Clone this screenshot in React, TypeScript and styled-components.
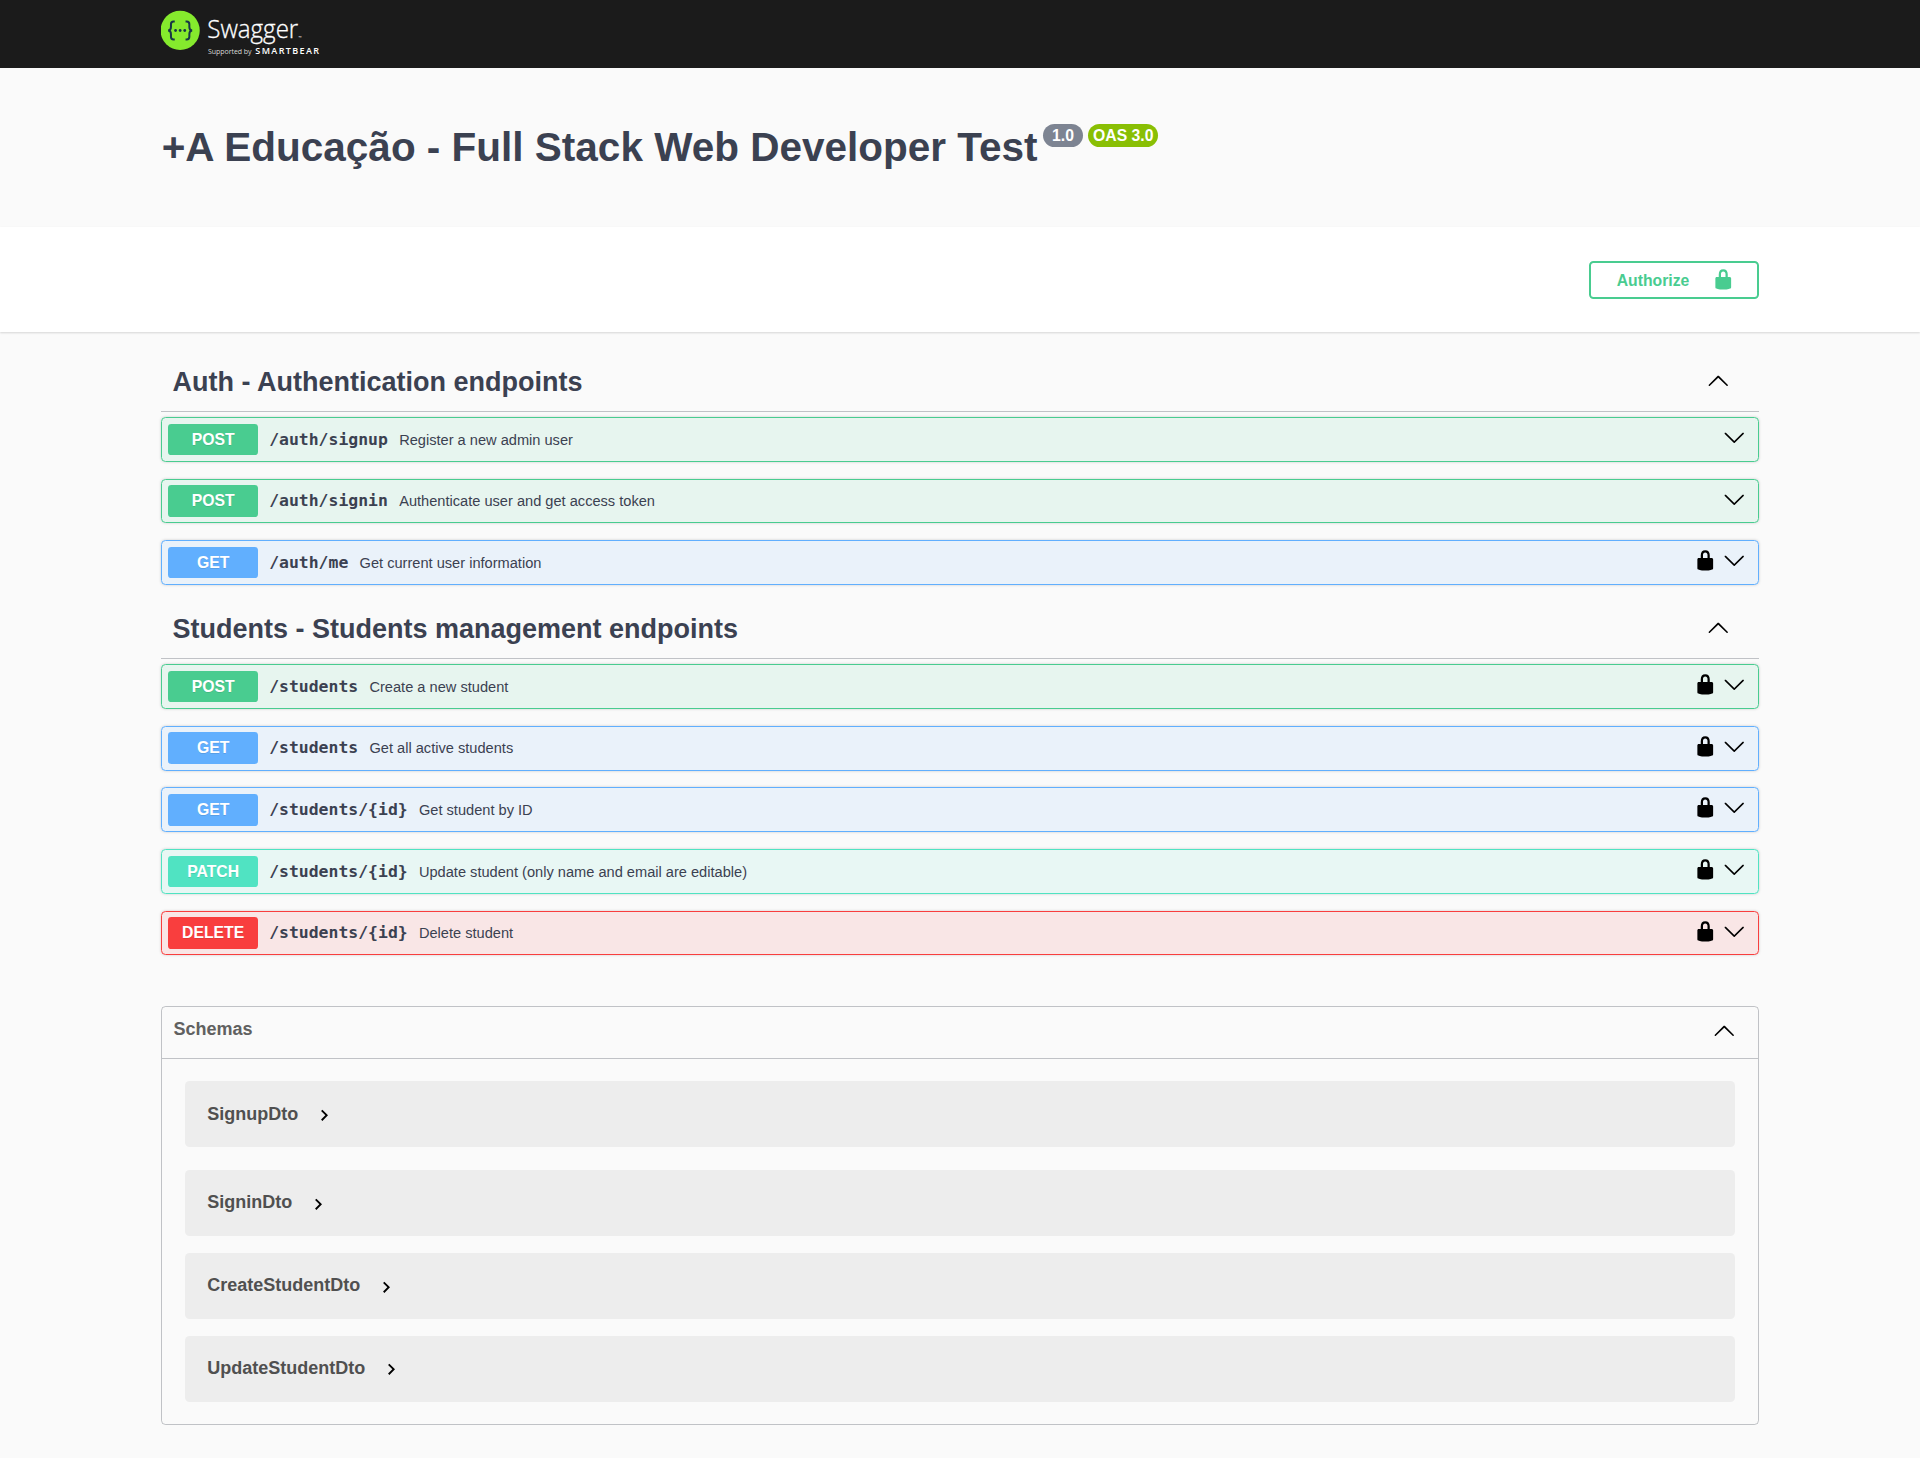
import React from "react";
import styled, { createGlobalStyle } from "styled-components";

const ink = "#3b4151";
const sans = `"Liberation Sans", Arial, sans-serif`;

const GlobalStyle = createGlobalStyle`
  *, *::before, *::after { box-sizing: border-box; }
  body { margin: 0; background: #fafafa; color: ${ink}; font-family: ${sans}; }
  h1, h2, h3, h4 { margin: 0; }
`;

const Page = styled.div`
  min-height: 1458px;
  overflow: hidden;
`;

const Wrapper = styled.div`
  width: 1597.5px;
  margin: 0 auto;
`;

const Topbar = styled.header`
  height: 67.5px;
  background: #1b1b1b;
`;

const LogoSvg = styled.svg`
  display: block;
`;

const Info = styled.section`
  height: 159.4px;
  padding-top: 56.2px;
`;

const Title = styled.h1`
  display: flex;
  align-items: flex-start;
  padding-left: 0.4px;
  font-size: 40.5px;
  line-height: 47px;
  font-weight: 700;
  white-space: nowrap;
`;

const Badge = styled.span<{ $bg: string; $pad: number }>`
  height: 22.5px;
  margin: 0.8px 0 0 5.8px;
  padding: 0 ${(p) => p.$pad}px;
  border-radius: 64px;
  background: ${(p) => p.$bg};
  color: #fff;
  font-size: 15.75px;
  line-height: 23px;
`;

const SchemeContainer = styled.section`
  height: 105.4px;
  padding: 33.75px 0;
  margin-bottom: 22.6px;
  background: #fff;
  box-shadow: 0 1px 2px rgba(0, 0, 0, 0.15);
`;

const SchemeRow = styled(Wrapper)`
  display: flex;
  justify-content: flex-end;
`;

const AuthorizeButton = styled.button`
  display: flex;
  align-items: center;
  justify-content: space-between;
  width: 170px;
  height: 38px;
  padding: 0 22.5px 0 26px;
  border: 2px solid #49cc90;
  border-radius: 4.5px;
  background: transparent;
  color: #49cc90;
  font: 700 15.75px ${sans};
`;

const AuthorizeLabel = styled.span`
  margin-top: 2px;
`;

const Icon = styled.svg`
  display: block;
  flex: none;
  width: 22.5px;
  height: 22.5px;
  fill: currentColor;
`;

const TagHeader = styled.div`
  display: flex;
  align-items: center;
  justify-content: space-between;
  height: 57px;
  margin-bottom: 5.2px;
  padding: 0 29.2px 1px 11.25px;
  border-bottom: 1px solid rgba(59, 65, 81, 0.3);
`;

const TagTitle = styled.h3`
  font-size: 27px;
  line-height: 31px;
`;

const TagArrow = styled.span`
  margin-bottom: 4px;
  color: #000;
`;

const Opblock = styled.div<{ $color: string; $tint: string }>`
  display: flex;
  align-items: center;
  height: 44.75px;
  margin-bottom: 16.875px;
  padding: 0 12px 0 5.625px;
  border: 1px solid ${(p) => p.$color};
  border-radius: 4.5px;
  background: ${(p) => p.$tint};
  box-shadow: 0 0 3px rgba(0, 0, 0, 0.19);
`;

const Method = styled.span<{ $color: string }>`
  width: 90px;
  height: 31.5px;
  padding-left: 0.5px;
  border-radius: 3.375px;
  background: ${(p) => p.$color};
  color: #fff;
  font-size: 15.75px;
  font-weight: 700;
  line-height: 31px;
  text-align: center;
  text-shadow: 0 1px 0 rgba(0, 0, 0, 0.1);
`;

const Path = styled.span`
  margin: 0.5px 11.25px 0;
  font: 700 16.44px/20px "DejaVu Sans Mono", monospace;
`;

const Summary = styled.span`
  flex: 1;
  margin-top: 0.5px;
  font-size: 14.625px;
  line-height: 18px;
`;

const Controls = styled.span`
  display: flex;
  gap: 6.9px;
  margin-bottom: 4.3px;
  color: #000;
`;

const Models = styled.section`
  height: 418.6px;
  margin-top: 50.6px;
  border: 1px solid rgba(59, 65, 81, 0.3);
  border-radius: 4.5px;
`;

const ModelsHeader = styled.div`
  display: flex;
  align-items: center;
  justify-content: space-between;
  height: 52px;
  margin-bottom: 22.3px;
  padding: 0 22.3px 0 11.25px;
  border-bottom: 1px solid rgba(59, 65, 81, 0.3);
  color: #606060;
`;

const ModelsTitle = styled.h4`
  margin-bottom: 7px;
  font-size: 18px;
  line-height: 20px;
`;

const ModelsArrow = styled.span`
  margin-bottom: 4.6px;
  color: #000;
`;

const Model = styled.div<{ $gap: number }>`
  display: flex;
  align-items: center;
  height: 66.1px;
  margin: 0 22.5px ${(p) => p.$gap}px;
  padding: 0 22.5px;
  border-radius: 4.5px;
  background: rgba(0, 0, 0, 0.052);
  color: #505050;
`;

const ModelName = styled.span`
  margin-bottom: 1.6px;
  font-size: 18px;
  font-weight: 700;
  line-height: 20px;
`;

const ModelToggle = styled.svg`
  width: 22.5px;
  height: 22.5px;
  margin: 1.4px 0 0 14.5px;
  fill: #000;
`;

const LOCK =
  "M15.8 8H14V5.6C14 2.703 12.665 1 10 1 7.334 1 6 2.703 6 5.6V8H4c-.553 0-1 .646-1 1.199V17c0 .549.428 1.139.951 1.307l1.197.387C5.672 18.861 6.55 19 7.1 19h5.8c.549 0 1.428-.139 1.951-.307l1.196-.387c.524-.167.953-.757.953-1.306V9.199C17 8.646 16.352 8 15.8 8zM12 8H8V5.199C8 3.754 8.797 3 10 3c1.203 0 2 .754 2 2.199V8z";
const DOWN =
  "M17.418 6.109c.272-.268.709-.268.979 0s.271.701 0 .969l-7.908 7.83c-.27.268-.707.268-.979 0l-7.908-7.83c-.27-.268-.27-.701 0-.969.271-.268.709-.268.979 0L10 13.25l7.418-7.141z";
const UP =
  "M17.418 14.908c.272.268.709.268.979 0s.271-.701 0-.969l-7.908-7.83c-.27-.268-.707-.268-.979 0l-7.908 7.83c-.27.268-.27.701 0 .969.271.268.709.268.979 0L10 7.767l7.418 7.141z";

const Glyph = ({ d }: { d: string }) => (
  <Icon viewBox="0 0 20 20" aria-hidden="true">
    <path d={d} />
  </Icon>
);

const Logo = () => (
  <LogoSvg width="170" height="67" viewBox="161.25 0 170 67" role="img" aria-label="Swagger">
    <circle cx="180.4" cy="30.4" r="19.6" fill="#85ea2d" />
    <g fill="none" stroke="#173647" strokeWidth="2">
      <path d="M175 21.6h-1.2q-2.6 0-2.6 2.7v2.7q0 3.3-2.8 3.5 2.8.2 2.8 3.5v2.7q0 2.7 2.6 2.7h1.2" />
      <path d="M185.8 21.6h1.2q2.6 0 2.6 2.7v2.7q0 3.3 2.8 3.5-2.8.2-2.8 3.5v2.7q0 2.7-2.6 2.7h-1.2" />
    </g>
    <g fill="#173647">
      <circle cx="175.8" cy="30.5" r="1.4" />
      <circle cx="180.4" cy="30.5" r="1.4" />
      <circle cx="185" cy="30.5" r="1.4" />
    </g>
    <g fill="#fff" fontFamily="'Open Sans', sans-serif">
      <text
        x="207.5"
        y="38"
        fontSize="25"
        fontWeight="300"
        stroke="#fff"
        strokeWidth="0.3"
        textLength="91"
        lengthAdjust="spacingAndGlyphs"
      >
        Swagger
      </text>
      <text x="298.8" y="38.8" fontSize="4" textLength="4.4">
        ™
      </text>
      <text x="208.2" y="54.2" fontSize="7" fill="#d8d8d8" textLength="43.6">
        Supported by
      </text>
      <text x="255.6" y="54.2" fontSize="9" fontWeight="600" textLength="63.6">
        SMARTBEAR
      </text>
    </g>
  </LogoSvg>
);

type Verb = "POST" | "GET" | "PATCH" | "DELETE";

const palette: Record<Verb, [string, string]> = {
  POST: ["#49cc90", "rgba(73, 204, 144, 0.1)"],
  GET: ["#61affe", "rgba(97, 175, 254, 0.1)"],
  PATCH: ["#50e3c2", "rgba(80, 227, 194, 0.1)"],
  DELETE: ["#f93e3e", "rgba(249, 62, 62, 0.1)"],
};

interface Operation {
  verb: Verb;
  path: string;
  summary: string;
  locked: boolean;
}

const tags: { name: string; operations: Operation[] }[] = [
  {
    name: "Auth - Authentication endpoints",
    operations: [
      { verb: "POST", path: "/auth/signup", summary: "Register a new admin user", locked: false },
      { verb: "POST", path: "/auth/signin", summary: "Authenticate user and get access token", locked: false },
      { verb: "GET", path: "/auth/me", summary: "Get current user information", locked: true },
    ],
  },
  {
    name: "Students - Students management endpoints",
    operations: [
      { verb: "POST", path: "/students", summary: "Create a new student", locked: true },
      { verb: "GET", path: "/students", summary: "Get all active students", locked: true },
      { verb: "GET", path: "/students/{id}", summary: "Get student by ID", locked: true },
      { verb: "PATCH", path: "/students/{id}", summary: "Update student (only name and email are editable)", locked: true },
      { verb: "DELETE", path: "/students/{id}", summary: "Delete student", locked: true },
    ],
  },
];

const schemas = ["SignupDto", "SigninDto", "CreateStudentDto", "UpdateStudentDto"];

export default function App() {
  return (
    <Page>
      <GlobalStyle />
      <Topbar>
        <Wrapper>
          <Logo />
        </Wrapper>
      </Topbar>
      <Info>
        <Wrapper>
          <Title>
            +A Educação - Full Stack Web Developer Test
            <Badge $bg="#7d8492" $pad={8.7}>1.0</Badge>
            <Badge $bg="#89bf04" $pad={4.7}>OAS 3.0</Badge>
          </Title>
        </Wrapper>
      </Info>
      <SchemeContainer>
        <SchemeRow>
          <AuthorizeButton>
            <AuthorizeLabel>Authorize</AuthorizeLabel>
            <Glyph d={LOCK} />
          </AuthorizeButton>
        </SchemeRow>
      </SchemeContainer>
      <Wrapper>
        {tags.map((tag) => (
          <section key={tag.name}>
            <TagHeader>
              <TagTitle>{tag.name}</TagTitle>
              <TagArrow>
                <Glyph d={UP} />
              </TagArrow>
            </TagHeader>
            {tag.operations.map((op) => {
              const [color, tint] = palette[op.verb];
              return (
                <Opblock key={op.verb + op.path} $color={color} $tint={tint}>
                  <Method $color={color}>{op.verb}</Method>
                  <Path>{op.path}</Path>
                  <Summary>{op.summary}</Summary>
                  <Controls>
                    {op.locked && <Glyph d={LOCK} />}
                    <Glyph d={DOWN} />
                  </Controls>
                </Opblock>
              );
            })}
          </section>
        ))}
        <Models>
          <ModelsHeader>
            <ModelsTitle>Schemas</ModelsTitle>
            <ModelsArrow>
              <Glyph d={UP} />
            </ModelsArrow>
          </ModelsHeader>
          {schemas.map((name, i) => (
            <Model key={name} $gap={i === 0 ? 22.7 : 16.875}>
              <ModelName>{name}</ModelName>
              <ModelToggle viewBox="0 0 24 24" aria-hidden="true">
                <path d="M10 6 8.59 7.41 13.17 12l-4.58 4.59L10 18l6-6z" />
              </ModelToggle>
            </Model>
          ))}
        </Models>
      </Wrapper>
    </Page>
  );
}
